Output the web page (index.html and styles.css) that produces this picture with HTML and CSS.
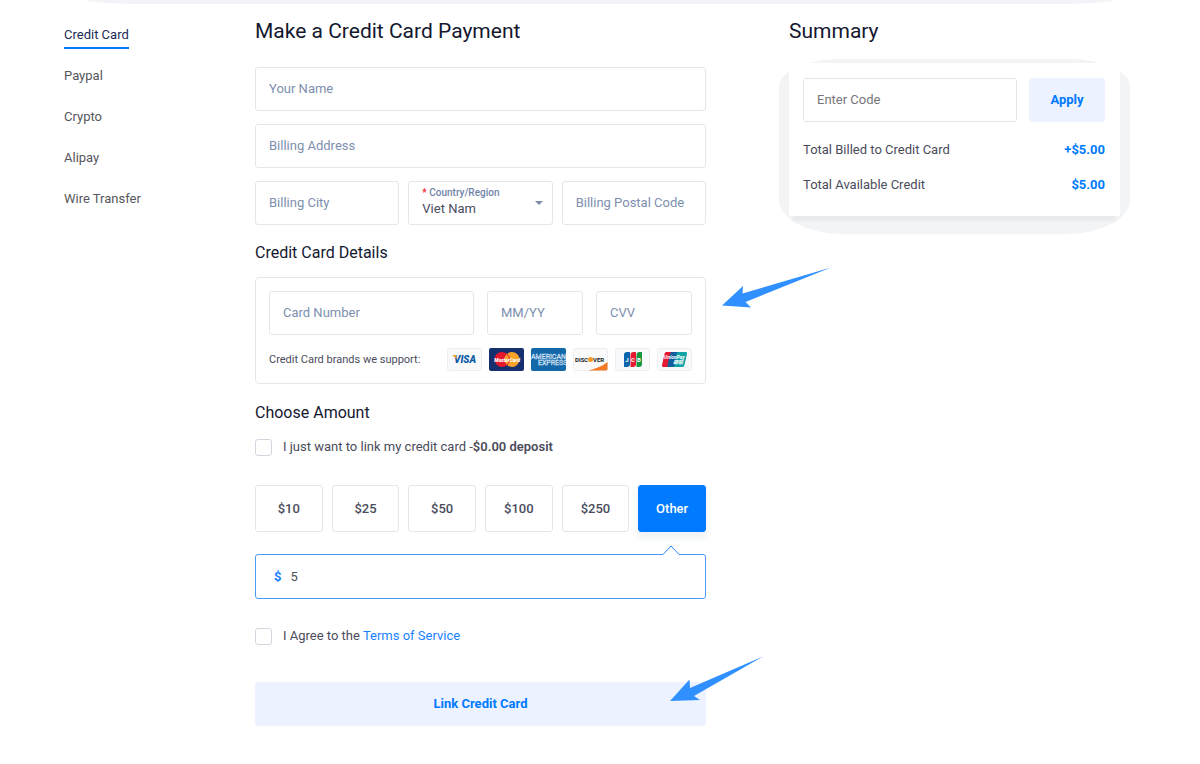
FILE: index.html
```html
<!DOCTYPE html>
<html lang="en">
<head>
    <meta charset="UTF-8">
    <meta name="viewport" content="width=device-width, initial-scale=1">
    <title>Make a Credit Card Payment</title>
    <link rel="stylesheet" href="styles.css">
</head>
<body>
    <div class="top-edge"></div>
    <div class="page">
        <nav class="methods">
            <a href="#credit-card" class="active">Credit Card</a>
            <a href="#paypal">Paypal</a>
            <a href="#crypto">Crypto</a>
            <a href="#alipay">Alipay</a>
            <a href="#wire">Wire Transfer</a>
        </nav>

        <main>
            <h1>Make a Credit Card Payment</h1>
            <form class="payment">
                <div class="billing">
                    <input class="field wide" type="text" placeholder="Your Name" aria-label="Your Name">
                    <input class="field wide" type="text" placeholder="Billing Address" aria-label="Billing Address">
                    <input class="field" type="text" placeholder="Billing City" aria-label="Billing City">
                    <div class="country">
                        <label for="country"><span class="required">*</span> Country/Region</label>
                        <select id="country">
                            <option>Viet Nam</option>
                        </select>
                        <svg class="caret" width="8" height="4" viewBox="0 0 8 4" aria-hidden="true"><path d="M0 0h8L4 4z" fill="#7d8ba8"/></svg>
                    </div>
                    <input class="field" type="text" placeholder="Billing Postal Code" aria-label="Billing Postal Code">
                </div>

                <h2>Credit Card Details</h2>
                <div class="card-details">
                    <div class="card-fields">
                        <input class="field" type="text" placeholder="Card Number" aria-label="Card Number">
                        <input class="field" type="text" placeholder="MM/YY" aria-label="Expiry date">
                        <input class="field" type="text" placeholder="CVV" aria-label="CVV">
                    </div>
                    <div class="brands">
                        <span>Credit Card brands we support:</span>
                        <div class="logos">
                            <svg viewBox="0 0 35 23" role="img" aria-label="Visa">
                                <rect x=".5" y=".5" width="34" height="22" rx="2" fill="#f8f9fb" stroke="#eceef1"/>
                                <text x="18" y="15" text-anchor="middle" font-size="10" font-weight="900" font-style="italic" fill="#0c5ba6">VISA</text>
                                <path d="M5 7h4l1 4z" fill="#f3a32b"/>
                            </svg>
                            <svg viewBox="0 0 35 23" role="img" aria-label="MasterCard">
                                <rect width="35" height="23" rx="2" fill="#16306f"/>
                                <circle cx="13" cy="11.500" r="7.500" fill="#e6182d"/>
                                <circle cx="23" cy="11.500" r="7.500" fill="#f9a428"/>
                                <path d="M18 5.900a7.500 7.500 0 0 1 0 11.200" fill="none" stroke="#e6182d"/>
                                <text x="18" y="13.500" text-anchor="middle" font-size="5" font-weight="900" font-style="italic" fill="#fff">MasterCard</text>
                            </svg>
                            <svg viewBox="0 0 35 23" role="img" aria-label="American Express">
                                <rect width="35" height="23" rx="2" fill="#1268a9"/>
                                <g font-size="7" font-weight="400" fill="#1268a9" stroke="#c9dff0" stroke-width=".5">
                                    <text x="0" y="10.500">AMERICAN</text>
                                    <text x="7" y="17">EXPRESS</text>
                                </g>
                            </svg>
                            <svg viewBox="0 0 35 23" role="img" aria-label="Discover">
                                <rect x=".5" y=".5" width="34" height="22" rx="2" fill="#fafafb" stroke="#eceef1"/>
                                <path d="M15 22.500Q27 20 34.500 14v7q0 1.500-1.500 1.500z" fill="#f47a25"/>
                                <g font-size="6" font-weight="700" fill="#222">
                                    <text x="2" y="13.500">DISC</text>
                                    <text x="20" y="13.500">VER</text>
                                </g>
                                <circle cx="17.500" cy="11.500" r="2.500" fill="#f79a22"/>
                            </svg>
                            <svg viewBox="0 0 35 23" role="img" aria-label="JCB">
                                <rect x=".5" y=".5" width="34" height="22" rx="2" fill="#f8f9fb" stroke="#eceef1"/>
                                <path d="M9 19V7q0-3 3-3h3v12q0 3-3 3z" fill="#0c64ad"/>
                                <path d="M15.500 19V7q0-3 3-3h2.500v12q0 3-3 3z" fill="#e5192f"/>
                                <path d="M21.500 19V7q0-3 3-3H27v12q0 3-3 3z" fill="#179640"/>
                                <g font-size="6" font-weight="700" fill="#fff" text-anchor="middle">
                                    <text x="12" y="13.500">J</text>
                                    <text x="18" y="13.500">C</text>
                                    <text x="24" y="13.500">B</text>
                                </g>
                            </svg>
                            <svg viewBox="0 0 35 23" role="img" aria-label="UnionPay">
                                <rect x=".5" y=".5" width="34" height="22" rx="2" fill="#f8f9fb" stroke="#eceef1"/>
                                <path d="M9 4h8l-3 15H6q-1.500 0-1-2L7.500 6Q8 4 9 4z" fill="#e5192f"/>
                                <path d="M15 4h8l-3 15h-8.500q-1.500 0-1-2L13 6q.5-2 2-2z" fill="#125f9e"/>
                                <path d="M21.500 4H29q1.500 0 1 2l-2.500 11q-.5 2-2 2H17l2.500-13q.5-2 2-2z" fill="#12a3a6"/>
                                <g font-size="5" font-weight="700" font-style="italic" fill="#fff">
                                    <text x="7" y="10.500">UnionPay</text>
                                    <text x="16" y="15.500">銀联</text>
                                </g>
                            </svg>
                        </div>
                    </div>
                    <svg class="pointer" width="110" height="42" viewBox="0 0 110 42" aria-hidden="true"><path d="M0 38.500 21 19l-.5 7.500L109 .5 23.500 35l5.500 5.500z"/></svg>
                </div>

                <h2>Choose Amount</h2>
                <label class="check"><input type="checkbox"><span>I just want to link my credit card -<b>$0.00 deposit</b></span></label>

                <div class="amounts">
                    <button type="button">$10</button>
                    <button type="button">$25</button>
                    <button type="button">$50</button>
                    <button type="button">$100</button>
                    <button type="button">$250</button>
                    <button type="button" class="selected">Other</button>
                </div>
                <div class="other-amount">
                    <label for="amount">$</label>
                    <input id="amount" type="text" value="5">
                    <svg class="notch" width="18" height="10" viewBox="0 0 18 10" aria-hidden="true"><path d="M0 10 1 9l8-8 8 8 1 1z" fill="#fff"/><path d="M0 9.500h1L9 1l8 8.500h1" fill="none" stroke="#2b8cff"/></svg>
                </div>

                <label class="check"><input type="checkbox"><span>I Agree to the <a href="#terms">Terms of Service</a></span></label>
                <div class="submit-row">
                    <button type="submit" class="soft-button">Link Credit Card</button>
                    <svg class="pointer" width="94" height="46" viewBox="0 0 94 46" aria-hidden="true"><path d="M0 45 19.500 23.500l.5 8.500L93 .5 24 40l6 4z"/></svg>
                </div>
            </form>
        </main>

        <aside>
            <h1>Summary</h1>
            <div class="summary">
                <form class="promo">
                    <input class="field" type="text" placeholder="Enter Code" aria-label="Enter Code">
                    <button type="submit" class="soft-button">Apply</button>
                </form>
                <dl>
                    <div><dt>Total Billed to Credit Card</dt><dd>+$5.00</dd></div>
                    <div><dt>Total Available Credit</dt><dd>$5.00</dd></div>
                </dl>
            </div>
        </aside>
    </div>
</body>
</html>
```
FILE: styles.css
```css
* {
    box-sizing: border-box;
}
body {
    margin: 0;
    background-color: #fff;
    color: #4a4c5c;
    font-family: Roboto, "Noto Sans CJK SC", sans-serif;
    font-size: 13px;
    line-height: 20px;
}
input, select, button {
    font: inherit;
    color: inherit;
}
a {
    color: #1a82ff;
    text-decoration: none;
}
h1, h2 {
    margin: 0;
    color: #14182f;
    font-weight: 400;
}
h1 {
    font-size: 21px;
    line-height: 30px;
    margin-bottom: 21px;
}
h2 {
    font-size: 16px;
    line-height: 24px;
}
b {
    font-weight: 600;
}

.top-edge {
    height: 4px;
    margin: 0 86px;
    background-color: #f3f4f7;
    border-radius: 0 0 60px 60px / 0 0 4px 4px;
}
.page {
    display: grid;
    grid-template-columns: 108px minmax(0, 451fr) minmax(0, 331fr);
    column-gap: 83px;
    align-items: start;
    padding: 12px 80px 38px 64px;
}

/* payment methods */
.methods {
    display: flex;
    flex-direction: column;
    align-items: flex-start;
    gap: 17px;
    padding-top: 9px;
}
.methods a {
    color: #56575c;
    height: 24px;
}
.methods .active {
    color: #1d2b58;
    border-bottom: 2px solid #007aff;
}

/* fields */
.field {
    width: 100%;
    min-width: 0;
    height: 44px;
    padding: 0 13px 2px;
    border: 1px solid #e6e6e8;
    border-radius: 3px;
    background-color: #fff;
}
.field::placeholder {
    color: #7d8fae;
    opacity: 1;
}
.billing {
    display: grid;
    grid-template-columns: repeat(3, minmax(0, 1fr));
    gap: 13px 9px;
    margin-bottom: 16px;
}
.wide {
    grid-column: 1 / -1;
}
.country {
    position: relative;
    display: flex;
    flex-direction: column;
    height: 44px;
    padding: 4px 13px;
    border: 1px solid #e6e6e8;
    border-radius: 3px;
}
.country label {
    color: #7284a8;
    font-size: 10px;
    font-weight: 500;
    line-height: 14px;
}
.required {
    color: #f5222d;
}
.country select {
    appearance: none;
    width: 100%;
    padding: 0;
    border: 0;
    background: none;
    line-height: 18px;
}
.caret {
    position: absolute;
    top: 19px;
    right: 9px;
    pointer-events: none;
}

/* card details */
.card-details {
    position: relative;
    margin: 12px 0 17px;
    padding: 13px 13px 12px;
    border: 1px solid #e6e6e8;
    border-radius: 4px;
}
.card-fields {
    display: grid;
    grid-template-columns: 205fr 96fr 96fr;
    gap: 13px;
}
.brands {
    display: flex;
    justify-content: space-between;
    align-items: center;
    margin-top: 13px;
    font-size: 11px;
}
.logos {
    display: flex;
    gap: 7px;
}
.logos svg {
    width: 35px;
    height: 23px;
}
.pointer {
    position: absolute;
    fill: #3190ff;
}
.card-details .pointer {
    top: -11px;
    right: -127px;
}

/* amount */
.check {
    display: flex;
    align-items: center;
    gap: 11px;
}
.check input {
    appearance: none;
    width: 17px;
    height: 17px;
    margin: 0;
    border: 1px solid #d5d5e0;
    border-radius: 3px;
    background-color: #fff;
}
.check input:checked {
    background-color: #007aff;
}
h2 + .check {
    margin-top: 12px;
}
.amounts {
    display: grid;
    grid-template-columns: repeat(6, minmax(0, 1fr));
    gap: 9px;
    margin: 28px 0 22px;
}
.amounts button {
    height: 47px;
    padding: 0;
    border: 1px solid #e6e6e8;
    border-radius: 3px;
    background-color: #fff;
    font-weight: 500;
    cursor: pointer;
}
.amounts .selected {
    border-color: #007aff;
    background-color: #007aff;
    color: #fff;
    box-shadow: 0 5px 6px 2px #f1f3f6;
}
.other-amount {
    position: relative;
    display: flex;
    align-items: center;
    gap: 9px;
    height: 45px;
    margin-bottom: 27px;
    padding: 0 18px;
    border: 1px solid #4a9bf5;
    border-radius: 3px;
}
.other-amount label {
    color: #1a82ff;
    font-weight: 700;
}
.other-amount input {
    flex: 1;
    min-width: 0;
    padding: 0;
    border: 0;
    outline: 0;
    background: none;
}
.notch {
    position: absolute;
    top: -10px;
    right: 25px;
}

.soft-button {
    height: 44px;
    border: 0;
    border-radius: 3px;
    background-color: #ecf2ff;
    color: #007aff;
    font-weight: 700;
    cursor: pointer;
}
.submit-row {
    position: relative;
    margin-top: 36px;
}
.submit-row .soft-button {
    width: 100%;
}
.submit-row .pointer {
    top: -26px;
    right: -58px;
}

/* summary */
aside h1 {
    margin-bottom: 17px;
}
.summary {
    position: relative;
    isolation: isolate;
    padding: 15px 15px 21px 14px;
    background-color: #fff;
}
.summary::before {
    content: "";
    position: absolute;
    inset: -4px -10px -18px;
    z-index: -2;
    border-radius: 60px 60px 64px 64px / 28px 28px 34px 34px;
    background-color: #f3f4f6;
}
/* contact shadow and the card surface */
.summary::after {
    content: "";
    position: absolute;
    inset: 0;
    z-index: -1;
    background-color: #fff;
    box-shadow: 0 9px 3px -4px #e8eaeb;
}
.promo {
    display: flex;
    gap: 12px;
}
.promo .field {
    flex: 1;
}
.promo .field::placeholder {
    color: #77757b;
}
.promo .soft-button {
    width: 76px;
}
dl {
    display: flex;
    flex-direction: column;
    gap: 15px;
    margin: 18px 0 0;
}
dl div {
    display: flex;
    justify-content: space-between;
}
dd {
    margin: 0;
    color: #007aff;
    font-weight: 700;
}
```
